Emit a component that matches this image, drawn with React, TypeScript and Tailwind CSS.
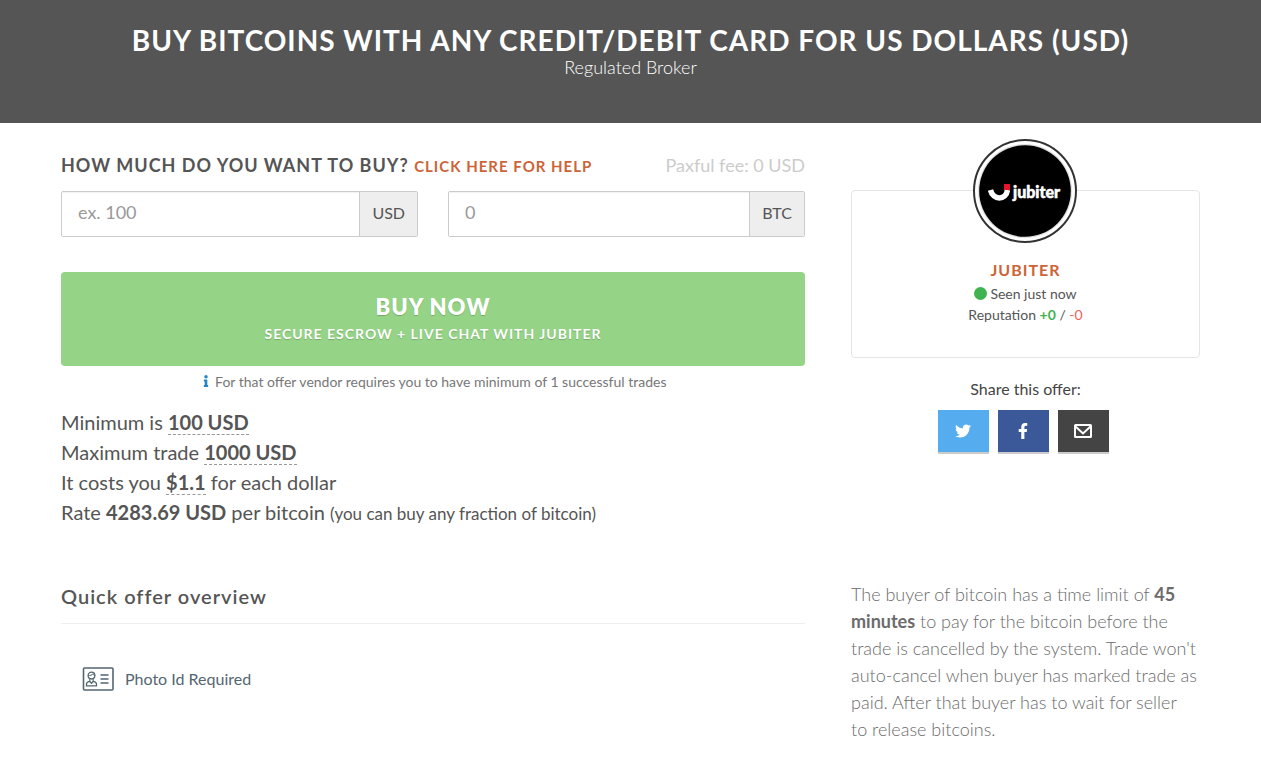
import { FaFacebookF, FaInfo, FaTwitter } from 'react-icons/fa';

function Header() {
  return (
    <header className="bg-[#555555] px-4 pt-6 pb-[45px] text-center text-white">
      <h1 className="text-[28px] leading-[33px] font-bold tracking-[1px] uppercase">
        Buy bitcoins with any credit/debit card for US Dollars (USD)
      </h1>
      <p className="text-lg leading-[21px] font-light">Regulated Broker</p>
    </header>
  );
}

function AmountField({ id, label, unit, placeholder }: { id: string; label: string; unit: string; placeholder: string }) {
  return (
    <div className="flex h-[46px] min-w-0 flex-1 overflow-hidden rounded-xs border border-[#cccccc]">
      <input
        id={id}
        type="text"
        aria-label={label}
        placeholder={placeholder}
        className="min-w-0 flex-1 bg-white px-4 pb-1 text-lg text-[#555555] inset-shadow-2xs outline-none placeholder:text-[#999999]"
      />
      <label htmlFor={id} className="flex items-center border-l border-[#cccccc] bg-[#eeeeee] px-3 pb-0.5 text-base text-[#555555]">
        {unit}
      </label>
    </div>
  );
}

function Term({ children }: { children: string }) {
  return <strong className="inline-block border-b border-dashed border-[#999999] leading-[23px] font-bold">{children}</strong>;
}

function OfferForm() {
  return (
    <section className="pt-[29px]">
      <div className="flex items-baseline justify-between">
        <h2 className="text-lg leading-[26px] font-bold tracking-[1px] uppercase">
          How much do you want to buy?{' '}
          <a href="#help" className="text-[15px] font-bold text-[#cc6437]">
            Click here for help
          </a>
        </h2>
        <span className="text-lg leading-[26px] text-[#cccccc]">Paxful fee: 0 USD</span>
      </div>
      <form className="mt-3" onSubmit={(e) => e.preventDefault()}>
        <div className="flex gap-[30px]">
          <AmountField id="usd" label="Amount in USD" unit="USD" placeholder="ex. 100" />
          <AmountField id="btc" label="Amount in BTC" unit="BTC" placeholder="0" />
        </div>
        <button
          type="submit"
          className="mt-[35px] block w-full rounded bg-[#95d486] pt-[21px] pb-[19px] text-center font-bold tracking-[1px] text-white uppercase text-shadow-xs"
        >
          <span className="block text-[22px] leading-7 font-extrabold">Buy now</span>
          <span className="block text-sm leading-[26px]">Secure escrow + live chat with Jubiter</span>
        </button>
      </form>
      <p className="mt-[5px] text-center text-sm leading-[21px] text-[#777777]">
        <FaInfo className="mb-1 inline-block size-3 text-[#2486c4]" />{' '}
        For that offer vendor requires you to have minimum of 1 successful trades
      </p>
      <div className="mt-[15px] text-xl leading-[30px]">
        <p>Minimum is <Term>100 USD</Term></p>
        <p>Maximum trade <Term>1000 USD</Term></p>
        <p>It costs you <Term>$1.1</Term> for each dollar</p>
        <p>
          Rate <strong>4283.69 USD</strong> per bitcoin <span className="text-[17px]">(you can buy any fraction of bitcoin)</span>
        </p>
      </div>
    </section>
  );
}

function JubiterAvatar() {
  return (
    <svg viewBox="0 0 104 104" className="size-[104px]" role="img" aria-label="Jubiter">
      <circle cx="52" cy="52" r="51" fill="#fff" stroke="#333" strokeWidth="2" />
      <circle cx="52" cy="52" r="47" fill="#ddd" />
      <circle cx="52" cy="52" r="45.8" fill="#000" />
      <path d="M17.500 51 C20 61.500 33 61.500 34.500 51" fill="none" stroke="#fff" strokeWidth="5.500" />
      <path d="M31 45h6v6h-6z" fill="#e5142d" />
      <text x="40" y="58.500" fill="#fff" stroke="#fff" strokeWidth="0.5" fontFamily="Lato, sans-serif" fontWeight="900" fontSize="16">
        jubiter
      </text>
    </svg>
  );
}

function MailIcon() {
  return (
    <svg viewBox="0 0 18 14" className="h-3.5 w-[18px]" fill="none" stroke="currentColor" strokeWidth="2" aria-hidden="true">
      <rect x="1" y="1" width="16" height="12" rx="0.500" />
      <path d="M1.500 2.500 9 9.500l7.500-7" />
    </svg>
  );
}

function VendorPanel() {
  return (
    <aside className="pt-[67px] text-center">
      <div className="relative rounded border border-[#e5e5e5] pt-[68px] pb-8">
        <div className="absolute inset-x-0 -top-[52px] flex justify-center pr-0.5">
          <JubiterAvatar />
        </div>
        <a href="#jubiter" className="block text-base leading-[22px] font-bold tracking-[1px] text-[#cc6437] uppercase">
          Jubiter
        </a>
        <p className="mt-0.5 flex items-center justify-center gap-[3px] text-sm leading-[21px]">
          <span className="size-[13px] rounded-full bg-[#3fb34f]" />
          Seen just now
        </p>
        <p className="text-sm leading-[21px]">
          Reputation <strong className="text-[#3fb34f]">+0</strong> / <span className="text-[#f0605c]">-0</span>
        </p>
      </div>
      <p className="mt-[19px] text-base leading-6 text-[#444444]">Share this offer:</p>
      <div className="mt-[9px] flex justify-center gap-[9px] pr-[5px] text-white">
        <a href="#twitter" aria-label="Share on Twitter" className="flex h-11 w-[51px] items-center justify-center border-b-2 border-[#cccccc] bg-[#55acee]">
          <FaTwitter className="size-4" />
        </a>
        <a href="#facebook" aria-label="Share on Facebook" className="flex h-11 w-[51px] items-center justify-center border-b-2 border-[#cccccc] bg-[#3b5998]">
          <FaFacebookF className="size-4" />
        </a>
        <a href="#email" aria-label="Share by email" className="flex h-11 w-[51px] items-center justify-center border-b-2 border-[#cccccc] bg-[#444444]">
          <MailIcon />
        </a>
      </div>
    </aside>
  );
}

function IdCardIcon() {
  return (
    <svg viewBox="0 0 32 24" className="h-6 w-8" fill="none" stroke="#546672" aria-hidden="true">
      <rect x="1.500" y="1" width="29.500" height="22" rx="1" strokeWidth="1.6" />
      <circle cx="9.5" cy="8.6" r="3.4" strokeWidth="1.3" />
      <path d="M6.200 8.400c2 .3 4-.3 4.600-1.600.3 1 1 1.500 2 1.600" strokeWidth="1" />
      <path d="M4.500 18.800v-1.800c0-1.500 1.200-2.200 3.200-2.700l1.800 2 1.800-2c2 .5 3.200 1.200 3.200 2.700v1.800z" strokeWidth="1.300" />
      <path d="M7.800 11.500v2.800M11.200 11.500v2.800" strokeWidth="1" />
      <path d="M18.500 8h8M18.500 12h8M18.500 16h8" strokeWidth="1.300" />
    </svg>
  );
}

function Overview() {
  return (
    <section className="pt-[53px]">
      <h2 className="border-b border-[#eeeeee] pb-[13px] text-xl leading-[28px] font-semibold tracking-[1px]">Quick offer overview</h2>
      <ul className="mt-[43px] pl-[21px]">
        <li className="flex items-center gap-[11px] text-base leading-6 text-[#546672]">
          <IdCardIcon />
          Photo Id Required
        </li>
      </ul>
    </section>
  );
}

export default function App() {
  return (
    <div className="min-h-screen bg-white font-[Lato,sans-serif] text-[#555555]">
      <Header />
      <main className="mx-auto grid max-w-[1171px] grid-cols-[744fr_349fr] gap-x-[46px] px-4">
        <OfferForm />
        <VendorPanel />
        <Overview />
        <p className="pt-[52px] text-lg leading-[27px] font-light text-[#6b6b6b]">
          The buyer of bitcoin has a time limit of <strong className="font-bold">45 minutes</strong> to pay for the bitcoin
          before the trade is cancelled by the system. Trade won't auto-cancel when buyer has marked trade as paid. After that
          buyer has to wait for seller to&nbsp;release bitcoins.
        </p>
      </main>
    </div>
  );
}
